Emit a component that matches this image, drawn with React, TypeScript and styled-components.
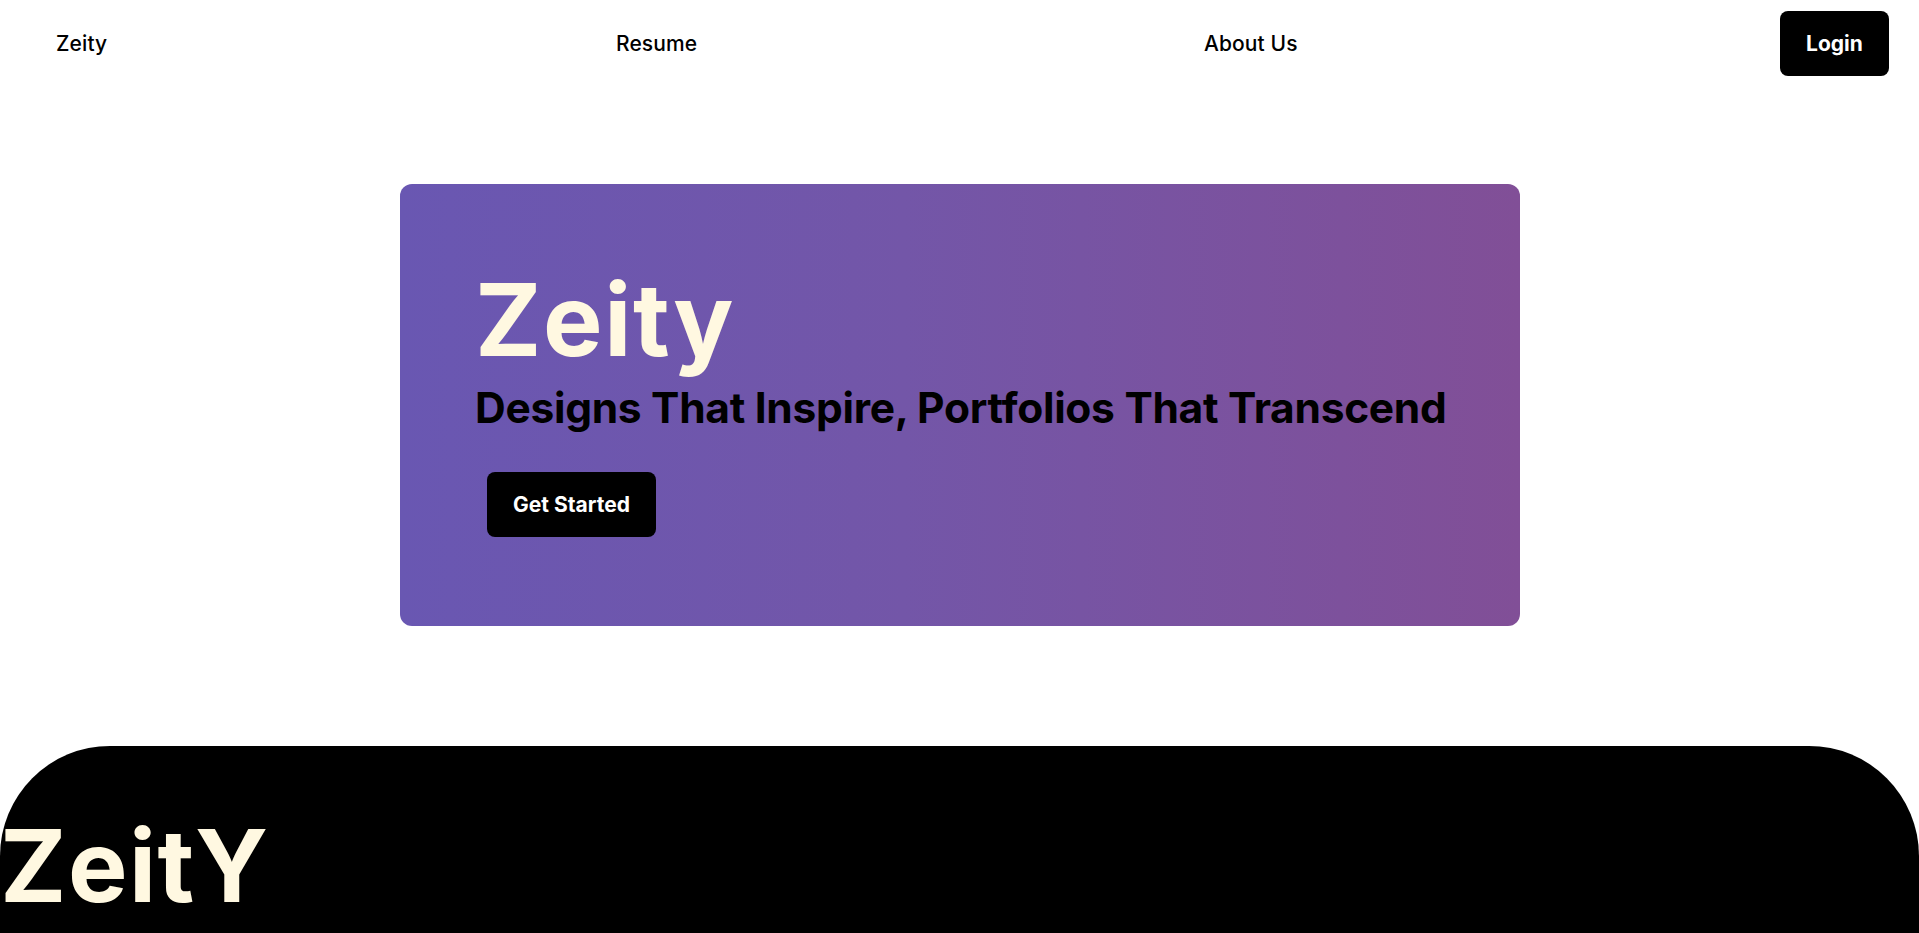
import React from "react";
import styled, { createGlobalStyle } from "styled-components";

const GlobalStyle = createGlobalStyle`
  html, body {
    margin: 0;
    padding: 0;
    background: #ffffff;
    font-family: Inter, "Noto Sans", "Liberation Sans", sans-serif;
    overflow: hidden;
  }
  * { box-sizing: border-box; }
`;

const Page = styled.div`
  width: 1919px;
  height: 933px;
  display: flex;
  flex-direction: column;
  overflow: hidden;
`;

const Nav = styled.nav`
  height: 87px;
  display: grid;
  grid-template-columns: 560px 588px 1fr auto;
  align-items: center;
  padding: 0 30px 0 56px;
`;

const NavLink = styled.a`
  font-size: 21px;
  font-weight: 500;
  color: #000;
  text-decoration: none;
  white-space: nowrap;
  letter-spacing: 0.1px;
`;

const LoginButton = styled.button`
  width: 109px;
  height: 65px;
  border: none;
  border-radius: 8px;
  background: #000;
  color: #fff;
  font-family: inherit;
  font-size: 21px;
  font-weight: 700;
  cursor: pointer;
  align-self: start;
  margin-top: 11px;
`;

const HeroWrap = styled.section`
  display: flex;
  justify-content: center;
  padding-top: 97px;
  padding-left: 1px;
`;

const HeroCard = styled.div`
  width: 1120px;
  height: 442px;
  border-radius: 12px;
  background: linear-gradient(to right, #6957b2 0%, #7356a8 45%, #814f97 100%);
  padding: 86px 0 0 75px;
  display: flex;
  flex-direction: column;
  align-items: flex-start;
`;

const HeroTitle = styled.h1`
  margin: 0;
  font-size: 100px;
  font-weight: 700;
  line-height: 1;
  color: #fff8e1;
  letter-spacing: 1.6px;
`;

const HeroSubtitle = styled.h2`
  margin: 12px 0 0;
  font-size: 42.5px;
  font-weight: 700;
  line-height: 1.2;
  color: #000;
  letter-spacing: -0.3px;
  white-space: nowrap;
`;

const CtaButton = styled.button`
  margin: 39px 0 0 12px;
  width: 169px;
  height: 65px;
  border: none;
  border-radius: 8px;
  background: #000;
  color: #fff;
  font-family: inherit;
  font-size: 21px;
  font-weight: 700;
  cursor: pointer;
`;

const Footer = styled.footer`
  margin-top: 120px;
  flex: 1;
  background: #000;
  border-radius: 110px 110px 0 0;
  padding: 70px 0 0 0;
`;

const FooterBrand = styled.div`
  font-family: Inter, "Noto Sans", sans-serif;
  font-size: 100px;
  font-weight: 700;
  line-height: 1;
  color: #fff8e1;
  letter-spacing: 1.5px;
`;

export default function App() {
  return (
    <Page>
      <GlobalStyle />
      <Nav>
        <NavLink href="#">Zeity</NavLink>
        <NavLink href="#">Resume</NavLink>
        <NavLink href="#">About Us</NavLink>
        <LoginButton>Login</LoginButton>
      </Nav>
      <HeroWrap>
        <HeroCard>
          <HeroTitle>Zeity</HeroTitle>
          <HeroSubtitle>Designs That Inspire, Portfolios That Transcend</HeroSubtitle>
          <CtaButton>Get Started</CtaButton>
        </HeroCard>
      </HeroWrap>
      <Footer>
        <FooterBrand>ZeitY</FooterBrand>
      </Footer>
    </Page>
  );
}
